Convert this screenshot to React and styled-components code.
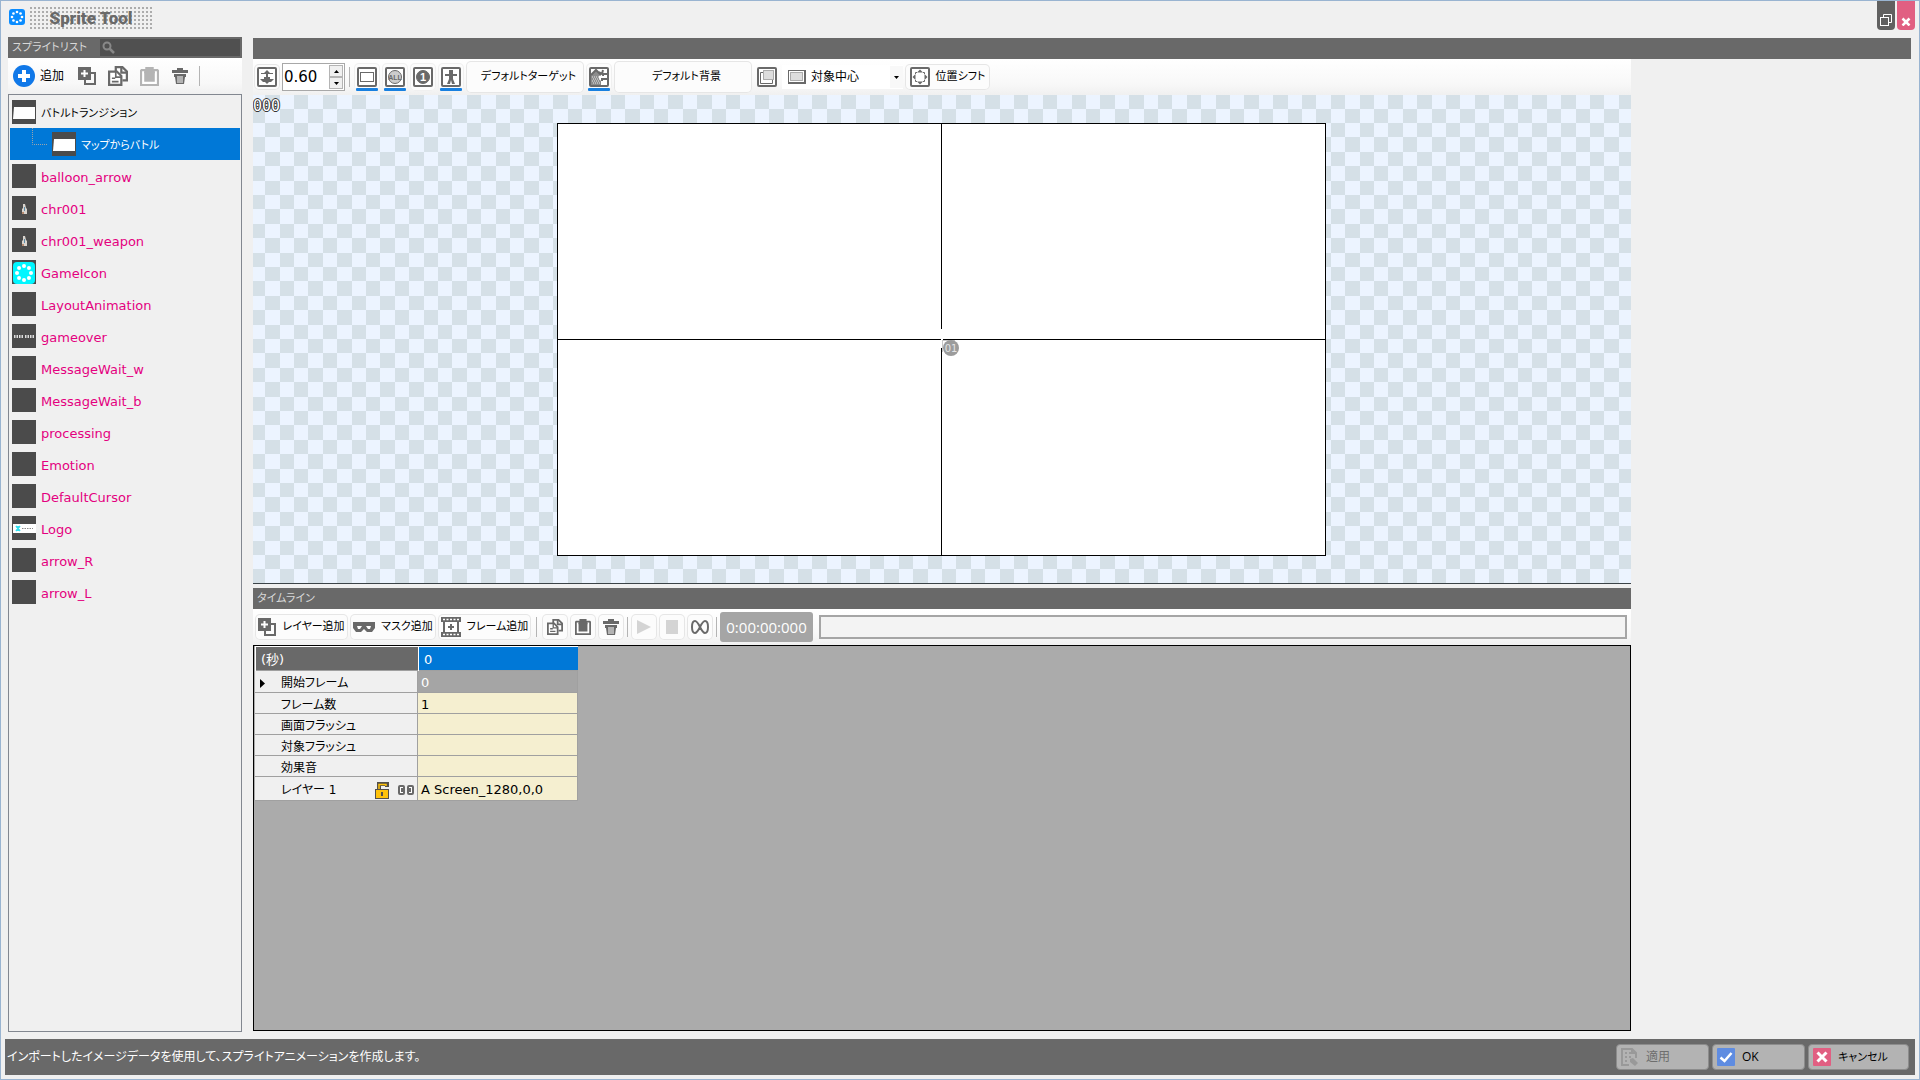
import React, { useState } from "react";
import styled, { createGlobalStyle, css } from "styled-components";

const INK = "#696969";
const FACE = "#f0f0f0";
const BLUE = "#0078d7";

const GlobalStyle = createGlobalStyle`
  *, *::before, *::after { box-sizing: border-box; }
  body { margin: 0; background: ${FACE}; }
  body, button, input, select {
    font-family: "DejaVu Sans", "Noto Sans CJK JP", sans-serif;
    font-size: 12px;
    font-feature-settings: "palt";
    color: #000;
  }
  button { margin: 0; padding: 0; border: 0; background: none; cursor: pointer; }
  svg { display: block; flex: none; }
`;

/* ---------- window ---------- */

const Window = styled.div`
  display: flex;
  flex-direction: column;
  height: 100vh;
  border: 1px solid #99b4d1;
  background: ${FACE};
  overflow: hidden;
`;

const TitleBar = styled.header`
  display: flex;
  align-items: flex-start;
  height: 36px;
  padding: 0 4px 0 8px;
`;

const AppIcon = styled.span`
  padding-top: 8px;
  margin-right: 5px;
`;

const Title = styled.h1`
  margin: 6px 0 0;
  width: 122px;
  height: 22px;
  font: 900 17px/22px "Impact", "Roboto", sans-serif;
  color: ${INK};
  text-align: center;
  background: conic-gradient(from 270deg at 2px 2px, #acacac 90deg, transparent 0) 0 0 / 4px 4px;
`;

const WindowButtons = styled.div`
  display: flex;
  gap: 2px;
  margin-left: auto;
`;

const WindowButton = styled.button`
  display: flex;
  justify-content: center;
  align-items: flex-start;
  padding-top: 11px;
  width: 18px;
  height: 29px;
  border-radius: 0 0 4px 4px;
  background: ${(p) => p.$color};
`;

const Body = styled.div`
  flex: 1;
  min-height: 0;
  display: flex;
  gap: 11px;
  padding: 0 8px 7px 7px;
`;

/* ---------- shared parts ---------- */

const PanelHeader = styled.div`
  flex: none;
  display: flex;
  align-items: center;
  height: 21px;
  padding: 2px 2px 2px 4px;
  line-height: 16px;
  color: #d8d8d8;
  background: ${INK};
`;

const PanelTitle = styled.h2`
  margin: 0;
  font-size: 11px;
  font-weight: normal;
`;

const Toolbar = styled.div`
  flex: none;
  display: flex;
  align-items: center;
  gap: 2px;
  height: 36px;
  padding: 0 4px 0 ${(p) => p.$start || 1}px;
  background: linear-gradient(#ffffff, #f8f8f8 70%, ${FACE});
`;

const Separator = styled.span`
  width: 1px;
  height: 20px;
  margin: 0 ${(p) => p.$space || 3}px;
  background: #b4b4b4;
`;

const ToolButton = styled.button`
  flex: none;
  display: flex;
  align-items: center;
  justify-content: center;
  gap: 6px;
  min-width: 26px;
  height: 26px;
  width: ${(p) => (p.$width ? `${p.$width}px` : "auto")};
  font-size: 11px;
  line-height: 18px;
  border-radius: 5px;
  white-space: nowrap;
  ${(p) =>
    !p.$plain &&
    css`
      background: #fcfcfc;
      box-shadow: inset 0 0 0 1px #e6e6e6;
    `}
  &:disabled { cursor: default; }
`;

const WideButton = styled(ToolButton)`
  height: 32px;
  padding-left: 7px;
`;

const AddButton = styled(ToolButton)`
  width: 57px;
  justify-content: flex-start;
  gap: 5px;
  padding-left: 1px;
  font-size: 12px;
`;

const ToggleButton = styled.button`
  display: flex;
  flex-direction: column;
  align-items: center;
  justify-content: flex-end;
  gap: 1px;
  width: 26px;
  height: 28px;
  border-radius: 5px;
  background: #fcfcfc;
  box-shadow: inset 0 0 0 1px #f0f0f0;
  &::after {
    content: "";
    width: 22px;
    height: 3px;
    border-radius: 1px;
    background: ${(p) => (p["aria-pressed"] ? "#1880e0" : "transparent")};
  }
`;

/* ---------- sprite list ---------- */

const Sidebar = styled.aside`
  flex: none;
  display: flex;
  flex-direction: column;
  width: 234px;
`;

const SearchBox = styled.label`
  display: flex;
  align-items: center;
  width: 140px;
  height: 17px;
  margin-left: auto;
  padding-left: 2px;
  background: #505050;
`;

const SearchInput = styled.input`
  flex: 1;
  min-width: 0;
  height: 17px;
  border: 0;
  outline: 0;
  color: #fff;
  background: transparent;
`;

const SideToolbar = styled(Toolbar)`
  gap: 5px;
  padding: 0 4px;
`;

const SpriteList = styled.ul`
  flex: 1;
  min-height: 0;
  overflow: auto;
  margin: 0;
  padding: 1px;
  list-style: none;
  border: 1px solid #828790;
`;

const SpriteRow = styled.button`
  display: flex;
  align-items: center;
  gap: 5px;
  width: 100%;
  height: 32px;
  padding-left: ${(p) => (p.$child ? 22 : 2)}px;
  text-align: left;
  font-size: ${(p) => (p.$native ? 11 : 13)}px;
  line-height: 20px;
  color: ${(p) => (p.$selected ? "#fff" : p.$native ? "#000" : "#e4007f")};
  background: ${(p) => (p.$selected ? BLUE : "transparent")};
`;

const SpriteName = styled.span`
  padding-top: 3px;
`;

const Thumb = styled.span`
  width: 24px;
  height: 24px;
  background: #4b4b4b;
`;

/* ---------- editor ---------- */

const Editor = styled.main`
  flex: 1;
  min-width: 0;
  display: flex;
  flex-direction: column;
  padding: 1px 0;
`;

const Columns = styled.div`
  flex: 1;
  min-height: 0;
  display: flex;
`;

const Workspace = styled.div`
  flex: 1;
  min-width: 0;
  display: flex;
  flex-direction: column;
`;

const Properties = styled.aside`
  flex: 0 0 280px;
`;

const Spin = styled.span`
  display: flex;
  width: 63px;
  height: 28px;
  padding: 1px;
  border: 1px solid #a8a8a8;
  background: #fff;
`;

const SpinInput = styled.input`
  width: 45px;
  padding: 0;
  border: 0;
  outline: 0;
  font-size: 15px;
  background: #fff;
`;

const SpinArrows = styled.span`
  flex: 1;
  display: grid;
  grid-template-rows: 1fr 1fr;
`;

const SpinArrow = styled.button`
  display: grid;
  place-items: center;
  border: 1px solid #b4b4b4;
  background: ${FACE};
`;

const Dropdown = styled.label`
  position: relative;
  display: flex;
  align-items: center;
  gap: 5px;
  width: 121px;
  height: 24px;
  padding-left: 6px;
  background: #fff;
`;

const DropdownSelect = styled.select`
  flex: 1;
  min-width: 0;
  height: 24px;
  padding: 0;
  border: 0;
  outline: 0;
  appearance: none;
  background: transparent;
`;

const DropdownArrow = styled.span`
  position: absolute;
  right: 0;
  top: 1px;
  display: grid;
  place-items: center;
  width: 13px;
  height: 22px;
  background: #f8f8f8;
  pointer-events: none;
`;

const Stage = styled.section`
  position: relative;
  flex: 1;
  min-height: 0;
  overflow: hidden;
  border-bottom: 1px solid #3c4448;
`;

const FrameNumber = styled.span`
  position: absolute;
  left: 0;
  top: 2px;
  font: 15px/18px "DejaVu Sans Mono", monospace;
  color: #fff;
  text-shadow: 1px 0 #333, -1px 0 #333, 0 1px #333, 0 -1px #333;
`;

const TimelinePanel = styled.section`
  flex: 0 0 443px;
  display: flex;
  flex-direction: column;
  margin-top: 4px;
`;

const TimeCode = styled.output`
  width: 93px;
  height: 30px;
  margin-right: 4px;
  border-radius: 3px;
  font: 15px/31px "Open Sans", sans-serif;
  text-align: center;
  color: #fff;
  background: #a5a5a5;
`;

const Progress = styled.div`
  flex: 1;
  height: 24px;
  border: 2px solid #a5a5a5;
  background: #f3f3f3;
`;

const Tracks = styled.div`
  flex: 1;
  min-height: 0;
  overflow: auto;
  border: 1px solid #000;
  background: #ababab;
`;

const TrackTable = styled.table`
  margin-left: 1px;
  border-collapse: separate;
  border-spacing: 0;
  table-layout: fixed;
  width: 323px;
`;

const HeadCell = styled.th`
  height: 25px;
  padding: 2px 5px 0;
  text-align: left;
  font-size: 13px;
  font-weight: normal;
  line-height: 20px;
  color: #fff;
  border: 1px solid #fff;
  border-width: 1px 0 0 1px;
  box-shadow: inset 0 -1px #a0a0a0;
  background: ${(p) => (p.$selected ? BLUE : INK)};
`;

const LabelCell = styled.th`
  height: ${(p) => p.$height}px;
  padding: 3px 3px 0 0;
  text-align: left;
  font-size: 12px;
  font-weight: normal;
  line-height: 16px;
  border: 1px solid #a0a0a0;
  border-width: 0 1px 1px 0;
  background: ${FACE};
`;

const LabelContent = styled.span`
  display: flex;
  align-items: center;
  height: 16px;
`;

const LabelGutter = styled.span`
  width: 26px;
  padding-left: 5px;
`;

const LayerFlags = styled.span`
  display: flex;
  align-items: center;
  gap: 9px;
  margin-left: auto;
`;

const ValueCell = styled.td`
  padding: 3px 3px 0;
  font-size: 13px;
  line-height: 16px;
  border: 1px solid #a0a0a0;
  border-width: 0 1px 1px 0;
  color: ${(p) => (p.$fixed ? "#fff" : "#000")};
  background: ${(p) => (p.$fixed ? "#a5a5a5" : "#f5efd0")};
`;

/* ---------- footer ---------- */

const Footer = styled.footer`
  flex: none;
  display: flex;
  align-items: center;
  height: 36px;
  margin: 0 4px 4px;
  padding: 0 6px 0 2px;
  color: #fff;
  background: ${INK};
`;

const HelpText = styled.p`
  flex: 1;
  margin: 0;
  line-height: 18px;
`;

const Actions = styled.div`
  display: flex;
  gap: 3px;
`;

const ActionButton = styled.button`
  display: flex;
  align-items: center;
  gap: 7px;
  width: ${(p) => (p.$wide ? 101 : 93)}px;
  height: 26px;
  padding-left: 4px;
  border: 1px solid #8c8c8c;
  border-radius: 4px;
  font-family: "Open Sans", "Noto Sans CJK JP", sans-serif;
  font-size: ${(p) => (p.$wide ? 11 : 12)}px;
  line-height: 18px;
  color: #000;
  background: #b3b3b3;
  &:disabled { color: #6e6e6e; }
`;

/* ---------- drawings ---------- */

const ring = (cx, cy, r) =>
  Array.from({ length: 8 }, (_, i) => {
    const a = (i * Math.PI) / 4;
    return [cx + r * Math.cos(a), cy + r * Math.sin(a)];
  });

const LogoIcon = () => (
  <svg width="16" height="16" viewBox="0 0 16 16">
    <rect width="16" height="16" rx="3" fill="#0a8cff" />
    {ring(8, 8, 5).map(([x, y]) => (
      <circle key={`${x} ${y}`} cx={x} cy={y} r="1.3" fill="#fff" />
    ))}
  </svg>
);

const RestoreIcon = () => (
  <svg width="14" height="14" viewBox="0 0 14 14" fill="none" stroke="#fff">
    <path d="M4.500 5V2.500h8v8H10" />
    <rect x="1.500" y="5.500" width="8" height="8" />
  </svg>
);

const CloseIcon = () => (
  <svg width="14" height="14" viewBox="0 0 14 14" stroke="#fff" strokeWidth="2.500">
    <path d="M3.500 6.500l7 7M10.500 6.500l-7 7" />
  </svg>
);

const SearchIcon = () => (
  <svg width="13" height="13" viewBox="0 0 13 13" fill="none" stroke="#888" strokeWidth="2">
    <circle cx="5" cy="5" r="3.500" />
    <path d="M7.500 7.500l4.500 4.500" strokeWidth="2.500" />
  </svg>
);

const AddIcon = () => (
  <svg width="22" height="22" viewBox="0 0 22 22">
    <circle cx="11" cy="11" r="11" fill="#1078e8" />
    <path d="M11 5v12M5 11h12" stroke="#fff" strokeWidth="4" />
  </svg>
);

const DuplicateIcon = () => (
  <svg width="18" height="18" viewBox="0 0 18 18">
    <path d="M13 6h4v11H7v-4" fill="none" stroke={INK} strokeWidth="2" />
    <rect width="13" height="13" fill={INK} />
    <path d="M6.500 3v7M3 6.500h7" stroke="#fff" strokeWidth="2" />
  </svg>
);

const CopyIcon = ({ size = 18 }) => (
  <svg width={size} height={size} viewBox="0 0 18 18" fill="#fff" stroke={INK} strokeWidth="2">
    <path d="M7 5V1h6l4 4v8h-4" />
    <path d="M12 1v5h5" fill="none" />
    <path d="M1 5h7l4 4v8H1z" />
    <path d="M7 5v5h5M3.500 11h3M3.500 14h6" fill="none" strokeWidth="1.500" />
  </svg>
);

const PasteIcon = ({ color = INK, size = 18 }) => (
  <svg width={size} height={size} viewBox="0 0 18 18">
    <path d="M1 2h4V0h8v2h4l1 1v15H0V3z" fill={color} />
    <path d="M2 4v12h14V4h-2v2H4V4z" fill="#fff" />
    <path d="M4 5l1-2h8l1 2v9H4z" fill={color} />
  </svg>
);

const TrashIcon = () => (
  <svg width="16" height="16" viewBox="0 0 16 16" fill={INK}>
    <path d="M5 0h6v2h5v3H0V2h5z" />
    <path d="M2 6h12v3h-1l-1 7H4L3 9H2z" />
    <path d="M6 8v7M8 8v7M10 8v7" stroke="#fff" />
  </svg>
);

const Framed = ({ children }) => (
  <svg width="20" height="20" viewBox="0 0 20 20">
    <rect x="1" y="1" width="18" height="18" rx="1" fill="#fff" stroke={INK} strokeWidth="2" />
    {children}
  </svg>
);

const ZoomIcon = () => (
  <Framed>
    <path d="M10 3l3 3h3v1h-5v3h2v2h4l-3 3h-2l-2 2-2-2H6l-3-3h4v-2h2V7H4V6h3z" fill={INK} />
  </Framed>
);

const ScreenIcon = () => (
  <Framed>
    <rect x="3.500" y="5.500" width="13" height="9" fill="none" stroke={INK} />
  </Framed>
);

const Badge = ({ label }) => (
  <Framed>
    <circle cx="10" cy="10" r="6.500" fill={label === "1" ? INK : "#ccc"} stroke={INK} />
    <text x="10" y={label === "1" ? 14 : 13} textAnchor="middle" fill={label === "1" ? "#fff" : INK}
      fontSize={label === "1" ? 11 : 7} fontWeight="bold" fontFamily="Liberation Sans">{label}</text>
  </Framed>
);

const PersonIcon = () => (
  <Framed>
    <path d="M8 3h4v4h4v2h-4v3l2 5h-3l-1-4-1 4H6l2-5V9H4V7h4z" fill={INK} />
  </Framed>
);

const BackgroundIcon = () => (
  <svg width="20" height="20" viewBox="0 0 20 20">
    <rect x="1" y="1" width="18" height="18" rx="1" fill="#fff" stroke={INK} strokeWidth="2" />
    <path d="M2 8l5-5 5 5-2 1v3l2 2v4H2z" fill="#8c8c8c" />
    <path d="M2 8l5-5 5 5" fill="none" stroke={INK} strokeWidth="2" />
    <path d="M3 10h7M4 12h7M3 14h7M4 16h7" stroke="#e8e8e8" strokeDasharray="1 1" />
    <path d="M10 5l3 2 1-4M18 7h-4v2M18 12h-5v2" fill="none" stroke={INK} strokeWidth="2" />
  </svg>
);

const OverlayIcon = () => (
  <Framed>
    <path d="M6 5.500H3.500v11h12V13" fill="none" stroke={INK} />
    <rect x="6.500" y="3.500" width="10" height="9" fill="#ddd" stroke={INK} strokeDasharray="1 1" />
  </Framed>
);

const ShiftIcon = () => (
  <Framed>
    <path d="M10 2.500l3 3H7zM10 17.500l3-3H7zM2.500 10l3-3v6zM17.500 10l-3-3v6z" fill={INK} />
    <path d="M5.500 7V5.500H7M13 5.500h1.500V7M14.500 13v1.500H13M7 14.500H5.500V13" fill="none" stroke={INK} />
  </Framed>
);

const CenterIcon = () => (
  <svg width="18" height="14" viewBox="0 0 18 14" fill="#ddd">
    <rect x=".5" y=".5" width="17" height="13" fill="#fff" stroke={INK} />
    <path d="M17 1v12H1" fill="none" stroke={INK} strokeWidth="2" />
    <rect x="2.500" y="2.500" width="12" height="8" stroke={INK} strokeDasharray="1 1" />
  </svg>
);

const Triangle = ({ d, width = 5, height = 3 }) => (
  <svg width={width} height={height} viewBox={`0 0 ${width} ${height}`}>
    <path d={d} />
  </svg>
);

const MaskIcon = () => (
  <svg width="22" height="10" viewBox="0 0 22 10">
    <path d="M0 0h22v6l-3 4h-5l-3-3-3 3H3L0 6z" fill={INK} />
    <path d="M4 4h5l-2 3H5zM13 4h5l-1 3h-2z" fill="#fff" />
  </svg>
);

const FilmIcon = () => (
  <svg width="20" height="20" viewBox="0 0 20 20">
    <path d="M0 0h20v5h-2v10h2v5H0v-5h2V5H0z" fill={INK} />
    <path d="M2 2.500h16M2 17.500h16" stroke="#fff" strokeDasharray="2 1.500" strokeWidth="1.500" />
    <rect x="4" y="5" width="12" height="10" fill="#fff" />
    <path d="M10 7v6M7 10h6" stroke={INK} strokeWidth="2" />
  </svg>
);

const PlayIcon = () => (
  <svg width="14" height="14" viewBox="0 0 14 14"><path d="M0 0l14 7-14 7z" fill="#d4d4d4" /></svg>
);
const StopIcon = () => (
  <svg width="12" height="14" viewBox="0 0 12 14"><path d="M0 0h12v14H0z" fill="#d4d4d4" /></svg>
);
const LoopIcon = () => (
  <svg width="18" height="14" viewBox="0 0 18 14" fill="none" stroke={INK} strokeWidth="2">
    <path d="M9 7C7 3 5 1 4 1 2 1 1 4 1 7s1 6 3 6c1 0 3-2 5-6s4-6 5-6c2 0 3 3 3 6s-1 6-3 6c-1 0-3-2-5-6z" />
  </svg>
);

const LockIcon = () => (
  <svg width="14" height="17" viewBox="0 0 14 17">
    <path d="M4 8V2h8v3" fill="none" stroke="#54504a" strokeWidth="4" />
    <path d="M4 8V2.500h7V4" fill="none" stroke="#ffc20a" strokeWidth="1.500" />
    <rect x=".5" y="7.500" width="13" height="9" fill="#ffc20a" stroke="#54504a" />
    <rect x="6" y="10" width="2" height="4" fill="#54504a" />
  </svg>
);

const EyesIcon = () => (
  <svg width="16" height="10" viewBox="0 0 16 10" fill="#fff" stroke={INK} strokeWidth="2">
    <rect x="1" y="1" width="5" height="8" rx="1" />
    <rect x="10" y="1" width="5" height="8" rx="1" />
    <path d="M4 3v4M12 3v4" />
  </svg>
);

const ApplyIcon = () => (
  <svg width="18" height="19" viewBox="0 0 18 19" fill="none" stroke="#999" strokeWidth="2">
    <path d="M8 17H1V1h10l4 4v5M11 1v4h4" />
    <path d="M4 5h2M8 5h2M4 9h2M8 9h2M4 13h2" />
    <path d="M9 11l3-1 5 5-3 3-5-4z" fill="#999" stroke="none" />
  </svg>
);
const OkIcon = () => (
  <svg width="18" height="18" viewBox="0 0 18 18">
    <rect width="18" height="18" rx="1" fill="#5f8ce1" />
    <path d="M3.500 9.500l4 3.500 7-8" fill="none" stroke="#fff" strokeWidth="2.500" />
  </svg>
);
const CancelIcon = () => (
  <svg width="18" height="18" viewBox="0 0 18 18">
    <rect width="18" height="18" rx="1" fill="#e15f82" />
    <path d="M4.500 4.500l9 9M13.500 4.500l-9 9" stroke="#fff" strokeWidth="3" />
  </svg>
);

const TreeBranch = () => (
  <svg width="15" height="32" viewBox="0 0 15 32" fill="none" stroke="#9aa4ac">
    <path d="M.5 0v16.500H15" strokeDasharray="1 1" />
  </svg>
);

const thumbArt = {
  screen: <path d="M1 19l1-12h21v12z" fill="#fff" />,
  character: (
    <g>
      <path d="M11 8h2l1 4 1 1v5h-5v-5l1-1z" fill="#d9d4ce" />
      <path d="M12 11h1v4h-1z" fill="#5c8ca8" />
      <path d="M10 16h2v2h-2z" fill="#b58a70" />
    </g>
  ),
  icon: (
    <g>
      <rect x="1" y="2" width="22" height="22" rx="4" fill="#00f6ff" />
      {ring(12, 13, 7).map(([x, y]) => (
        <circle key={`${x} ${y}`} cx={x} cy={y} r="2" fill="#fff" />
      ))}
    </g>
  ),
  gameover: (
    <path d="M2 12.500h9M13 12.500h9" stroke="#ddd" strokeWidth="3" strokeDasharray="1.500 1" />
  ),
  logo: (
    <g>
      <rect x="1" y="8" width="23" height="9" fill="#fff" />
      <path d="M4 10l4 5M8 10l-4 5M6 10v5" stroke="#30e0f0" strokeWidth="1.500" />
      <path d="M10 12.500h11" stroke="#888" strokeDasharray="1.500 1" />
    </g>
  ),
};

const SpriteThumb = ({ kind }) => (
  <Thumb>
    <svg width="24" height="24" viewBox="0 0 24 24">{thumbArt[kind]}</svg>
  </Thumb>
);

const CELLS = Array.from({ length: 10 }, (_, i) => i);
const edge = (i) => Math.round(i * 14.4);
const checker = CELLS.flatMap((r) => CELLS.filter((c) => (r + c) % 2 === 0).map((c) => [c, r]));

const StageDrawing = () => (
  <svg width="100%" height="100%">
    <rect width="100%" height="100%" fill="#ecf4ff" />
    <svg x="50%" y="50%" overflow="visible">
      <defs>
        <pattern id="checker" width="144" height="144" patternUnits="userSpaceOnUse">
          {checker.map(([c, r]) => (
            <rect key={`${c}-${r}`} x={edge(c)} y={edge(r)} fill="#d5e0e7"
              width={edge(c + 1) - edge(c)} height={edge(r + 1) - edge(r)} />
          ))}
        </pattern>
      </defs>
      <rect x="-2880" y="-1440" width="5760" height="2880" fill="url(#checker)" />
      <g shapeRendering="crispEdges">
        <rect x="-384" y="-215" width="767" height="431" fill="#fff" />
        <path d="M-384.500-215.500h768v432h-768zM-.5-215v205M-.5 9v207M-384 .5h383M1 .5h382"
          fill="none" stroke="#000" />
        <path d="M.5 1v12M1 1.500h12" stroke="#c8c8c8" fill="none" />
      </g>
      <circle cx="9" cy="9" r="8" fill="#9c9c9c" />
      <text x="9" y="13" textAnchor="middle" fontSize="10" fontFamily="DejaVu Sans" fill="#e4e4e4">01</text>
    </svg>
  </svg>
);

/* ---------- data ---------- */

const sprites = [
  { name: "バトルトランジション", thumb: "screen", native: true },
  { name: "マップからバトル", thumb: "screen", native: true, child: true },
  { name: "balloon_arrow" },
  { name: "chr001", thumb: "character" },
  { name: "chr001_weapon", thumb: "character" },
  { name: "GameIcon", thumb: "icon" },
  { name: "LayoutAnimation" },
  { name: "gameover", thumb: "gameover" },
  { name: "MessageWait_w" },
  { name: "MessageWait_b" },
  { name: "processing" },
  { name: "Emotion" },
  { name: "DefaultCursor" },
  { name: "Logo", thumb: "logo" },
  { name: "arrow_R" },
  { name: "arrow_L" },
];

const tracks = [
  { label: "開始フレーム", value: "0", fixed: true, current: true, height: 22 },
  { label: "フレーム数", value: "1", height: 21 },
  { label: "画面フラッシュ", value: "", height: 21 },
  { label: "対象フラッシュ", value: "", height: 21 },
  { label: "効果音", value: "", height: 21 },
  { label: "レイヤー 1", value: "A Screen_1280,0,0", layer: true, height: 24 },
];

/* ---------- sections ---------- */

function SpritePanel() {
  const [selected, setSelected] = useState("マップからバトル");
  return (
    <Sidebar>
      <PanelHeader>
        <PanelTitle>スプライトリスト</PanelTitle>
        <SearchBox>
          <SearchIcon />
          <SearchInput type="text" aria-label="検索" />
        </SearchBox>
      </PanelHeader>
      <SideToolbar>
        <AddButton $plain><AddIcon />追加</AddButton>
        <ToolButton $plain aria-label="複製"><DuplicateIcon /></ToolButton>
        <ToolButton $plain aria-label="コピー"><CopyIcon size={20} /></ToolButton>
        <ToolButton $plain aria-label="貼り付け" disabled><PasteIcon color="#b4b4b4" size={19} /></ToolButton>
        <ToolButton $plain aria-label="削除"><TrashIcon /></ToolButton>
        <Separator $space={1} />
      </SideToolbar>
      <SpriteList>
        {sprites.map((s) => (
          <li key={s.name}>
            <SpriteRow $native={s.native} $child={s.child} $selected={s.name === selected}
              onClick={() => setSelected(s.name)}>
              {s.child && <TreeBranch />}
              <SpriteThumb kind={s.thumb} />
              <SpriteName>{s.name}</SpriteName>
            </SpriteRow>
          </li>
        ))}
      </SpriteList>
    </Sidebar>
  );
}

function StageToolbar() {
  const [zoom, setZoom] = useState(0.6);
  const step = (d) => setZoom((z) => Math.max(0.1, z + d));
  const [on, setOn] = useState({ screen: true, all: true, one: false, target: true, back: true });
  const toggle = (key, label, icon) => (
    <ToggleButton aria-pressed={on[key]} aria-label={label}
      onClick={() => setOn({ ...on, [key]: !on[key] })}>{icon}</ToggleButton>
  );
  return (
    <Toolbar>
      <ToolButton aria-label="画面に合わせる"><ZoomIcon /></ToolButton>
      <Spin>
        <SpinInput aria-label="表示倍率" value={zoom.toFixed(2)} readOnly />
        <SpinArrows>
          <SpinArrow aria-label="拡大" onClick={() => step(0.1)}><Triangle d="M2.500 0L5 3H0z" /></SpinArrow>
          <SpinArrow aria-label="縮小" onClick={() => step(-0.1)}><Triangle d="M0 0h5L2.500 3z" /></SpinArrow>
        </SpinArrows>
      </Spin>
      <Separator $space={2} />
      {toggle("screen", "画面枠", <ScreenIcon />)}
      {toggle("all", "全レイヤー", <Badge label="ALL" />)}
      {toggle("one", "選択レイヤー", <Badge label="1" />)}
      {toggle("target", "ターゲット", <PersonIcon />)}
      <WideButton $width={118}>デフォルトターゲット</WideButton>
      {toggle("back", "背景", <BackgroundIcon />)}
      <WideButton $width={138}>デフォルト背景</WideButton>
      <ToolButton $plain aria-label="重ね表示"><OverlayIcon /></ToolButton>
      <Dropdown>
        <CenterIcon />
        <DropdownSelect aria-label="表示位置"><option>対象中心</option></DropdownSelect>
        <DropdownArrow><Triangle d="M0 0h5L2.500 3z" /></DropdownArrow>
      </Dropdown>
      <ToolButton $width={85}><ShiftIcon />位置シフト</ToolButton>
    </Toolbar>
  );
}

function Timeline() {
  return (
    <TimelinePanel>
      <PanelHeader><PanelTitle>タイムライン</PanelTitle></PanelHeader>
      <Toolbar $start={2}>
        <ToolButton $width={93}><DuplicateIcon />レイヤー追加</ToolButton>
        <ToolButton $width={86}><MaskIcon />マスク追加</ToolButton>
        <ToolButton $width={93}><FilmIcon />フレーム追加</ToolButton>
        <Separator />
        <ToolButton aria-label="コピー"><CopyIcon size={16} /></ToolButton>
        <ToolButton aria-label="貼り付け"><PasteIcon size={16} /></ToolButton>
        <ToolButton aria-label="削除"><TrashIcon /></ToolButton>
        <Separator $space={1} />
        <ToolButton aria-label="再生" disabled><PlayIcon /></ToolButton>
        <ToolButton aria-label="停止" disabled><StopIcon /></ToolButton>
        <ToolButton aria-label="ループ"><LoopIcon /></ToolButton>
        <Separator $space={1} />
        <TimeCode>0:00:00:000</TimeCode>
        <Progress role="progressbar" aria-label="再生位置" aria-valuenow={0} />
      </Toolbar>
      <Tracks>
        <TrackTable>
          <colgroup><col width="163" /><col width="160" /></colgroup>
          <thead>
            <tr><HeadCell>(秒)</HeadCell><HeadCell $selected>0</HeadCell></tr>
          </thead>
          <tbody>
            {tracks.map((t) => (
              <tr key={t.label}>
                <LabelCell scope="row" $height={t.height}>
                  <LabelContent>
                    <LabelGutter>
                      {t.current && <Triangle d="M0 0l5 4.500L0 9z" height={9} />}
                    </LabelGutter>
                    {t.label}
                    {t.layer && <LayerFlags><LockIcon /><EyesIcon /></LayerFlags>}
                  </LabelContent>
                </LabelCell>
                <ValueCell $fixed={t.fixed}>{t.value}</ValueCell>
              </tr>
            ))}
          </tbody>
        </TrackTable>
      </Tracks>
    </TimelinePanel>
  );
}

export default function App() {
  return (
    <Window>
      <GlobalStyle />
      <TitleBar>
        <AppIcon><LogoIcon /></AppIcon>
        <Title>Sprite Tool</Title>
        <WindowButtons>
          <WindowButton $color="#606060" aria-label="元に戻す"><RestoreIcon /></WindowButton>
          <WindowButton $color="#e15f82" aria-label="閉じる"><CloseIcon /></WindowButton>
        </WindowButtons>
      </TitleBar>
      <Body>
        <SpritePanel />
        <Editor>
          <PanelHeader />
          <Columns>
            <Workspace>
              <StageToolbar />
              <Stage>
                <StageDrawing />
                <FrameNumber>000</FrameNumber>
              </Stage>
              <Timeline />
            </Workspace>
            <Properties />
          </Columns>
        </Editor>
      </Body>
      <Footer>
        <HelpText>インポートしたイメージデータを使用して、スプライトアニメーションを作成します。</HelpText>
        <Actions>
          <ActionButton disabled><ApplyIcon />適用</ActionButton>
          <ActionButton><OkIcon />OK</ActionButton>
          <ActionButton $wide><CancelIcon />キャンセル</ActionButton>
        </Actions>
      </Footer>
    </Window>
  );
}
